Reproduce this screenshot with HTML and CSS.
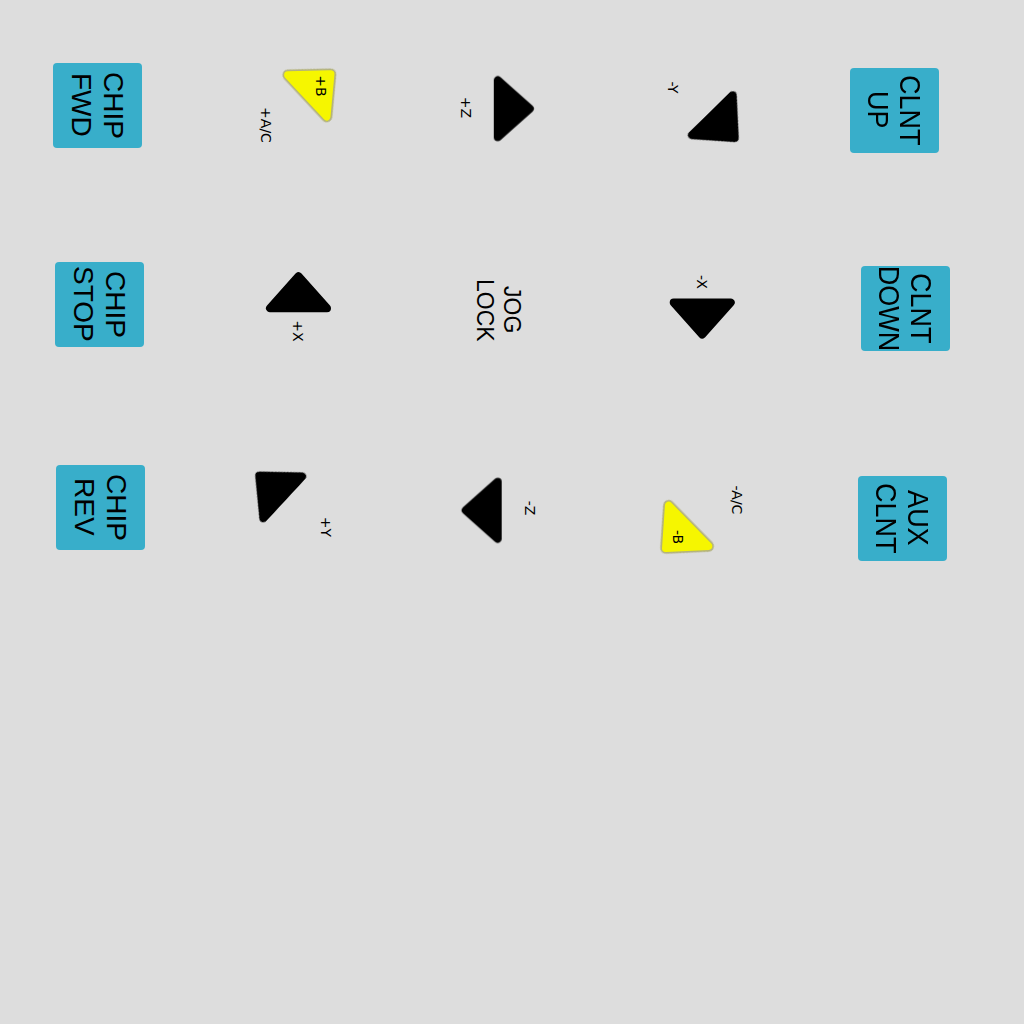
FILE: index.html
```html
<!DOCTYPE html>
<html lang="en">
<head>
<meta charset="utf-8">
<title>Jog panel</title>
<link rel="stylesheet" href="styles.css">
</head>
<body>
<main class="pad">
  <!-- row 1 -->
  <div class="cell"><div class="btn fwd"><span class="btn-text">CHIP<br>FWD</span></div></div>
  <div class="cell">
    <svg class="jog" viewBox="0 0 200 200" width="200" height="200">
      <defs><filter id="soft" x="-20%" y="-20%" width="140%" height="140%"><feGaussianBlur stdDeviation="0.6"/></filter></defs>
      <g class="tri-y" transform="translate(119 80) rotate(47)">
        <polygon class="edge" points="0,-16 -28.5,16 28.5,16"/>
        <polygon class="face" points="0,-16 -28.5,16 28.5,16"/>
      </g>
      <text class="lab" x="121" y="81" transform="rotate(90 121 81)">+B</text>
      <text class="lab" x="66" y="120" transform="rotate(90 66 120)">+A/C</text>
    </svg>
  </div>
  <div class="cell">
    <svg class="jog" viewBox="0 0 200 200" width="200" height="200">
      <g class="tri" transform="translate(113.8 103.7) rotate(90)"><polygon points="0,-16 -28.5,16 28.5,16"/></g>
      <text class="lab" x="66" y="102.5" transform="rotate(90 66 102.5)">+Z</text>
    </svg>
  </div>
  <div class="cell">
    <svg class="jog" viewBox="0 0 200 200" width="200" height="200">
      <g class="tri" transform="translate(123.5 121.6) rotate(135.6)"><polygon points="0,-16 -28.5,16 28.5,16"/></g>
      <text class="lab" x="73" y="82.5" transform="rotate(90 73 82.5)">-Y</text>
    </svg>
  </div>
  <div class="cell"><div class="btn clnt up"><span class="btn-text">CLNT<br>UP</span></div></div>

  <!-- row 2 -->
  <div class="cell"><div class="btn stop"><span class="btn-text">CHIP<br>STOP</span></div></div>
  <div class="cell">
    <svg class="jog" viewBox="0 0 200 200" width="200" height="200">
      <g class="tri" transform="translate(98.5 87.2)"><polygon points="0,-16 -28.5,16 28.5,16"/></g>
      <text class="lab" x="98" y="126" transform="rotate(90 98 126)">+X</text>
    </svg>
  </div>
  <div class="cell"><span class="lock">JOG<br>LOCK</span></div>
  <div class="cell">
    <svg class="jog" viewBox="0 0 200 200" width="200" height="200">
      <g class="tri" transform="translate(102.2 113.5) rotate(180)"><polygon points="0,-16 -28.5,16 28.5,16"/></g>
      <text class="lab" x="101.7" y="77" transform="rotate(90 101.7 77)">-X</text>
    </svg>
  </div>
  <div class="cell"><div class="btn clnt down"><span class="btn-text">CLNT<br>DOWN</span></div></div>

  <!-- row 3 -->
  <div class="cell"><div class="btn rev"><span class="btn-text">CHIP<br>REV</span></div></div>
  <div class="cell">
    <svg class="jog" viewBox="0 0 200 200" width="200" height="200">
      <g class="tri" transform="translate(71 81.5) rotate(-47.2)"><polygon points="0,-16 -28.5,16 28.5,16"/></g>
      <text class="lab" x="126" y="122" transform="rotate(90 126 122)">+Y</text>
    </svg>
  </div>
  <div class="cell">
    <svg class="jog" viewBox="0 0 200 200" width="200" height="200">
      <g class="tri" transform="translate(81.7 105.3) rotate(-90)"><polygon points="0,-16 -28.5,16 28.5,16"/></g>
      <text class="lab" x="130" y="103" transform="rotate(90 130 103)">-Z</text>
    </svg>
  </div>
  <div class="cell">
    <svg class="jog" viewBox="0 0 200 200" width="200" height="200">
      <g class="tri-y" transform="translate(77.2 132) rotate(-134.4)">
        <polygon class="edge" points="0,-16 -28.5,16 28.5,16"/>
        <polygon class="face" points="0,-16 -28.5,16 28.5,16"/>
      </g>
      <text class="lab" x="77.5" y="132" transform="rotate(90 77.5 132)">-B</text>
      <text class="lab" x="136.7" y="95" transform="rotate(90 136.7 95)">-A/C</text>
    </svg>
  </div>
  <div class="cell"><div class="btn clnt aux"><span class="btn-text">AUX<br>CLNT</span></div></div>
</main>
</body>
</html>
```

FILE: styles.css
```css
html, body {
  margin: 0;
  padding: 0;
  background: #dddddd;
}

body {
  width: 1024px;
  height: 1024px;
  font-family: "Liberation Sans", Arial, sans-serif;
  color: #000;
}

.pad {
  display: grid;
  grid-template-columns: repeat(5, 200px);
  grid-template-rows: repeat(3, 200px);
  padding-top: 5px;
}

.cell {
  display: flex;
  align-items: center;
  justify-content: center;
  width: 200px;
  height: 200px;
}

.jog {
  display: block;
  overflow: visible;
}

.tri polygon {
  fill: #000;
  stroke: #000;
  stroke-width: 8;
  stroke-linejoin: round;
  filter: url(#soft);
}

.tri-y .edge {
  fill: #b3b27c;
  stroke: #b3b27c;
  stroke-width: 11;
  stroke-linejoin: round;
  filter: url(#soft);
}

.tri-y .face {
  fill: #f6f600;
  stroke: #f6f600;
  stroke-width: 7.5;
  stroke-linejoin: round;
}

.lab {
  font-family: "DejaVu Sans", sans-serif;
  font-size: 14px;
  fill: #000;
  text-anchor: middle;
  dominant-baseline: central;
}

.btn {
  width: 89px;
  height: 85px;
  border-radius: 4px;
  background: #38aeca;
  display: flex;
  align-items: center;
  justify-content: center;
}

.btn-text {
  writing-mode: vertical-rl;
  text-align: center;
  white-space: nowrap;
  font-size: 28px;
  line-height: 32px;
}

.clnt .btn-text {
  font-size: 30px;
  transform: scaleY(0.9);
}

.lock {
  writing-mode: vertical-rl;
  text-align: center;
  white-space: nowrap;
  font-size: 23px;
  line-height: 27px;
  margin-top: 10px;
  margin-right: 4px;
}

/* small placement nudges of the individual buttons */
.fwd  { margin-right: 6px; }
.stop { margin-right: 2px; margin-bottom: 2px; }
.rev  { margin-top: 4px; }
.up   { margin-right: 12px; margin-top: 10px; }
.down { margin-left: 10px; margin-top: 6px; }
.aux  { margin-left: 4px; margin-top: 26px; }
```
